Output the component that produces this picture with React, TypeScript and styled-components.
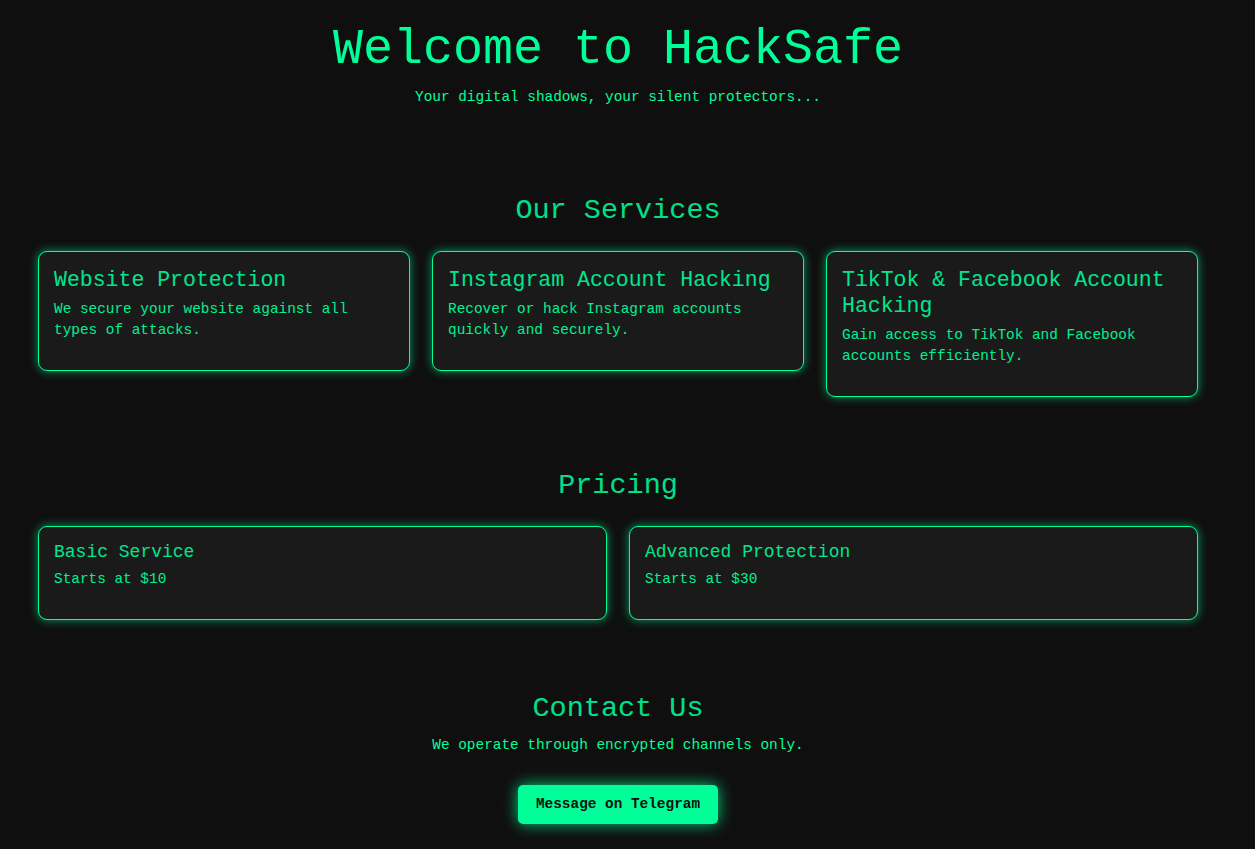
import { createGlobalStyle } from "styled-components";
import styled from "styled-components";

const GlobalStyle = createGlobalStyle`
  html, body {
    margin: 0;
    padding: 0;
    background-color: #0f0f0f;
  }
  body {
    font-family: "Liberation Mono", "Courier New", monospace;
    color: #00ff99;
  }
  * {
    box-sizing: border-box;
  }
`;

const SPage = styled.div`
  width: 1236px;
  padding: 20px 38px 30px;
`;

const SHeader = styled.header`
  text-align: center;

  h1 {
    margin: 0;
    font-size: 50px;
    line-height: 60px;
    font-weight: normal;
    color: #00ff99;
  }

  p {
    margin: 7px 0 0;
    font-size: 14.4px;
    line-height: 21px;
  }
`;

const SSection = styled.section<{ $gap: number }>`
  margin-top: ${(p) => p.$gap}px;
`;

const SSectionTitle = styled.h2<{ $spacing: number }>`
  margin: 0 0 ${(p) => p.$spacing}px;
  text-align: center;
  font-size: 28.5px;
  line-height: 34px;
  font-weight: normal;
  color: #00e08a;
`;

const SGrid = styled.div<{ $cols: number }>`
  display: grid;
  grid-template-columns: repeat(${(p) => p.$cols}, 1fr);
  gap: 22px;
  align-items: start;
`;

const SCard = styled.div<{ $size: "lg" | "sm" }>`
  background-color: #1a1a1a;
  border: 1px solid #00ff99;
  border-radius: 9px;
  padding: 15px;
  box-shadow: 0 0 10px rgba(0, 255, 153, 0.6);

  h3 {
    margin: 0 0 ${(p) => (p.$size === "lg" ? 6 : 7)}px;
    font-size: ${(p) => (p.$size === "lg" ? 21.5 : 18)}px;
    line-height: ${(p) => (p.$size === "lg" ? 26 : 20)}px;
    font-weight: normal;
    color: #00e68f;
  }

  p {
    margin: 0 0 14px;
    font-size: 14.4px;
    line-height: 21px;
    color: #00f093;
  }
`;

const SContact = styled.div`
  text-align: center;

  p {
    margin: 0;
    font-size: 14.4px;
    line-height: 21px;
  }
`;

const STelegramBtn = styled.button`
  margin-top: 29px;
  padding: 11px 18px;
  border: none;
  border-radius: 5px;
  background-color: #00ff99;
  color: #0f0f0f;
  font-family: "Liberation Mono", "Courier New", monospace;
  font-size: 14.4px;
  line-height: 17px;
  font-weight: bold;
  cursor: pointer;
  box-shadow: 0 0 15px rgba(0, 255, 153, 0.8);
`;

const services = [
  {
    title: "Website Protection",
    text: "We secure your website against all types of attacks.",
  },
  {
    title: "Instagram Account Hacking",
    text: "Recover or hack Instagram accounts quickly and securely.",
  },
  {
    title: "TikTok & Facebook Account Hacking",
    text: "Gain access to TikTok and Facebook accounts efficiently.",
  },
];

const prices = [
  { title: "Basic Service", text: "Starts at $10" },
  { title: "Advanced Protection", text: "Starts at $30" },
];

const App = () => {
  return (
    <>
      <GlobalStyle />
      <SPage>
        <SHeader>
          <h1>Welcome to HackSafe</h1>
          <p>Your digital shadows, your silent protectors...</p>
        </SHeader>

        <SSection $gap={86}>
          <SSectionTitle $spacing={23}>Our Services</SSectionTitle>
          <SGrid $cols={3}>
            {services.map((s) => (
              <SCard key={s.title} $size="lg">
                <h3>{s.title}</h3>
                <p>{s.text}</p>
              </SCard>
            ))}
          </SGrid>
        </SSection>

        <SSection $gap={72}>
          <SSectionTitle $spacing={23}>Pricing</SSectionTitle>
          <SGrid $cols={2}>
            {prices.map((p) => (
              <SCard key={p.title} $size="sm">
                <h3>{p.title}</h3>
                <p>{p.text}</p>
              </SCard>
            ))}
          </SGrid>
        </SSection>

        <SSection $gap={72}>
          <SSectionTitle $spacing={9}>Contact Us</SSectionTitle>
          <SContact>
            <p>We operate through encrypted channels only.</p>
            <STelegramBtn onClick={() => console.log("telegram")}>
              Message on Telegram
            </STelegramBtn>
          </SContact>
        </SSection>
      </SPage>
    </>
  );
};

export default App;
